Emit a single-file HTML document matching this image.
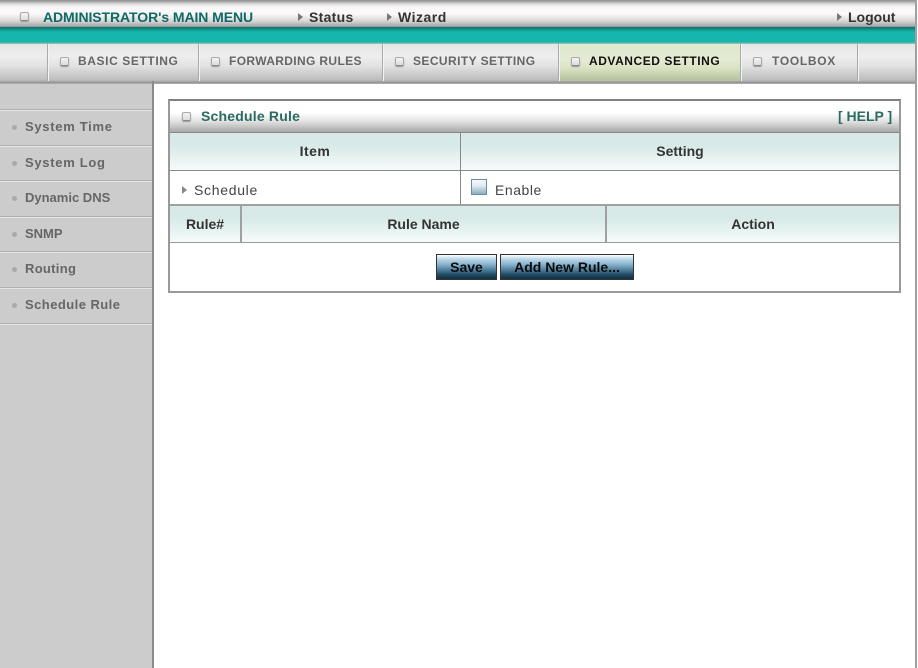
<!DOCTYPE html>
<html><head><meta charset="utf-8"><style>
html,body{margin:0;padding:0;background:#fff}
body{width:918px;height:668px;position:relative;overflow:hidden;font-family:"Liberation Sans",Arial,sans-serif}
#w{position:absolute;left:0;top:0;width:918px;height:668px;filter:blur(.35px)}
.a{position:absolute}
.t{position:absolute;white-space:nowrap;line-height:16px;height:16px}
.b{font-weight:bold}
.sq{position:absolute;width:7px;height:7px;background:linear-gradient(#f4f4f4,#ddd);border:1px solid #aaa;border-bottom-color:#888;border-radius:2px;box-shadow:0 1px 1px #999}
.tri{position:absolute;width:0;height:0;border-left:5px solid #777;border-top:4px solid transparent;border-bottom:4px solid transparent}
.tabsep{position:absolute;top:44px;height:37px;width:1px;background:#aaa;border-right:1px solid #f4f4f4}
.tab{font-size:12px;font-weight:bold;color:#666;top:53px}
.side{font-size:13px;font-weight:bold;color:#666;left:25px}
.dot{position:absolute;left:12px;width:5px;height:5px;border-radius:50%;background:#aaa}
.sl{position:absolute;left:0;width:152px;height:2px;background:linear-gradient(#b0b0b0 50%,#e4e4e4 50%)}
.hd{background:linear-gradient(#d8eae8 0%,#d8eae8 35%,#f6fbfa 100%)}
.l{position:absolute;background:#888}
.th{font-size:14px;font-weight:bold;color:#333;text-align:center}
.btn{position:absolute;top:254px;height:26px;box-sizing:border-box;border:1px solid #333;background:linear-gradient(#fff 0%,#c4dcec 14%,#86b1cc 40%,#4f7f9b 62%,#1f4a63 82%,#14303f 100%);font-size:14px;font-weight:bold;color:#0a0a0a;text-align:center;line-height:24px;white-space:nowrap}
</style></head><body><div id="w">

<div class="a" style="left:0;top:0;width:915px;height:27px;background:linear-gradient(#8f8f8f 0,#b0b0b0 2px,#ddd 4px,#faf7f8 7px,#fbf8f9 14px,#d8d6d6 21px,#a9a9a9 26px,#8a8a8a 27px)"></div>
<div class="a" style="left:0;top:27px;width:915px;height:17px;background:linear-gradient(#0b6f69 0,#0f8d86 2px,#17b6ad 5px,#17b6ad 15px,#6db5ae 16px,#a8c8c4 17px)"></div>
<div class="a" style="left:0;top:44px;width:915px;height:38px;background:linear-gradient(#e6e6e6 0,#eeeeee 12px,#e2e2e2 22px,#bdbdbd 36px,#a0a0a0 38px)"></div>
<div class="a" style="left:0;top:82px;width:915px;height:2px;background:linear-gradient(#8f8f8f,#b0b0b0)"></div>

<div class="a" style="left:560px;top:44px;width:180px;height:37px;background:linear-gradient(#dfe8cc 0,#e3ebd3 15px,#d9e4c4 24px,#b6c2a0 36px)"></div>

<div class="sq" style="left:20px;top:12px"></div>
<div class="t b" style="left:43px;top:9px;font-size:14px;color:#0e6a66;letter-spacing:-.08px">ADMINISTRATOR's MAIN MENU</div>
<div class="tri" style="left:298px;top:13px"></div>
<div class="t b" style="left:309px;top:9px;font-size:14px;color:#333;letter-spacing:.3px">Status</div>
<div class="tri" style="left:387px;top:13px"></div>
<div class="t b" style="left:398px;top:9px;font-size:14px;color:#333;letter-spacing:.5px">Wizard</div>
<div class="tri" style="left:837px;top:13px"></div>
<div class="t b" style="left:848px;top:9px;font-size:14px;color:#333">Logout</div>

<div class="tabsep" style="left:47px"></div>
<div class="tabsep" style="left:198px"></div>
<div class="tabsep" style="left:382px"></div>
<div class="tabsep" style="left:558px"></div>
<div class="tabsep" style="left:740px"></div>
<div class="tabsep" style="left:857px"></div>

<div class="sq" style="left:60px;top:57px"></div><div class="t tab" style="left:78px;letter-spacing:.6px">BASIC SETTING</div>
<div class="sq" style="left:211px;top:57px"></div><div class="t tab" style="left:229px;letter-spacing:.36px">FORWARDING RULES</div>
<div class="sq" style="left:395px;top:57px"></div><div class="t tab" style="left:413px;letter-spacing:.42px">SECURITY SETTING</div>
<div class="sq" style="left:571px;top:57px"></div><div class="t tab" style="left:589px;color:#111;letter-spacing:.55px">ADVANCED SETTING</div>
<div class="sq" style="left:753px;top:57px"></div><div class="t tab" style="left:772px;letter-spacing:.7px">TOOLBOX</div>

<div class="a" style="left:0;top:84px;width:152px;height:584px;background:#ccc"></div>
<div class="a" style="left:152px;top:81px;width:2px;height:587px;background:#8a8a8a"></div>
<div class="a" style="left:915px;top:0;width:2px;height:668px;background:#a0a0a0"></div>

<div class="sl" style="top:109px"></div>
<div class="sl" style="top:145px"></div>
<div class="sl" style="top:180px"></div>
<div class="sl" style="top:216px"></div>
<div class="sl" style="top:251px"></div>
<div class="sl" style="top:287px"></div>
<div class="sl" style="top:323px"></div>

<div class="dot" style="top:125px"></div><div class="t side" style="top:119px;letter-spacing:.7px">System Time</div>
<div class="dot" style="top:161px"></div><div class="t side" style="top:155px;letter-spacing:.7px">System Log</div>
<div class="dot" style="top:196px"></div><div class="t side" style="top:190px">Dynamic DNS</div>
<div class="dot" style="top:232px"></div><div class="t side" style="top:226px">SNMP</div>
<div class="dot" style="top:267px"></div><div class="t side" style="top:261px;letter-spacing:.3px">Routing</div>
<div class="dot" style="top:303px"></div><div class="t side" style="top:297px;letter-spacing:.45px">Schedule Rule</div>

<!-- panel -->
<div class="a" style="left:168px;top:99px;width:733px;height:194px;box-sizing:border-box;border:2px solid #999;border-top-color:#808080;background:#fff"></div>
<div class="a" style="left:170px;top:101px;width:729px;height:31px;background:linear-gradient(#fff 0,#fff 12px,#e4e3e3 20px,#a9a9a9 31px)"></div>
<div class="a hd" style="left:170px;top:133px;width:729px;height:37px"></div>
<div class="a hd" style="left:170px;top:206px;width:729px;height:36px"></div>

<div class="l" style="left:170px;top:132px;width:729px;height:1px"></div>
<div class="l" style="left:170px;top:170px;width:729px;height:1px"></div>
<div class="l" style="left:170px;top:204px;width:729px;height:2px;background:#a0a0a0"></div>
<div class="l" style="left:170px;top:242px;width:729px;height:1px;background:#999"></div>
<div class="l" style="left:460px;top:133px;width:1px;height:71px"></div>
<div class="l" style="left:240px;top:206px;width:2px;height:36px;background:#a0a0a0"></div>
<div class="l" style="left:605px;top:206px;width:2px;height:36px;background:#a0a0a0"></div>

<div class="sq" style="left:182px;top:112px"></div>
<div class="t b" style="left:201px;top:108px;font-size:14px;color:#2a6a63;letter-spacing:.2px">Schedule Rule</div>
<div class="t b" style="left:838px;top:108px;font-size:14px;color:#2a6a63;width:54px;text-align:right">[ HELP ]</div>

<div class="t th" style="left:170px;top:143px;width:290px;letter-spacing:.5px">Item</div>
<div class="t th" style="left:461px;top:143px;width:438px">Setting</div>

<div class="tri" style="left:182px;top:186px;border-left-color:#888"></div>
<div class="t" style="left:194px;top:182px;font-size:14px;color:#444;letter-spacing:.7px">Schedule</div>
<div class="a" style="left:471px;top:179px;width:16px;height:16px;box-sizing:border-box;border:1px solid #6d8da3;background:linear-gradient(#f4f8fb 0,#e2ecf2 40%,#88adc4 100%)"></div>
<div class="t" style="left:495px;top:182px;font-size:14px;color:#444;letter-spacing:.55px">Enable</div>

<div class="t th" style="left:170px;top:216px;width:70px">Rule#</div>
<div class="t th" style="left:242px;top:216px;width:363px">Rule Name</div>
<div class="t th" style="left:607px;top:216px;width:292px">Action</div>

<div class="btn" style="left:436px;width:61px">Save</div>
<div class="btn" style="left:500px;width:134px">Add New Rule...</div>

</div></body></html>
